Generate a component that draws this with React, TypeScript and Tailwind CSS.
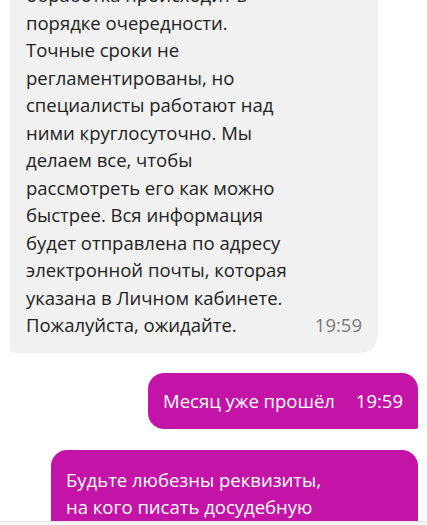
const incoming = [
  "обработка происходит в",
  "порядке очередности.",
  "Точные сроки не",
  "регламентированы, но",
  "специалисты работают над",
  "ними круглосуточно. Мы",
  "делаем все, чтобы",
  "рассмотреть его как можно",
  "быстрее. Вся информация",
  "будет отправлена по адресу",
  "электронной почты, которая",
  "указана в Личном кабинете.",
]

export default function App() {
  return (
    <div
      className="relative h-[525px] w-[427px] overflow-hidden bg-white text-[18.5px] leading-[27.5px]"
      style={{ fontFamily: '"Open Sans", "Noto Sans", sans-serif' }}
    >
      <div className="-mt-[29px] flex flex-col">
        <div className="ml-[10px] w-[368px] rounded-[18px] rounded-bl-[4px] bg-[#f1f1f1] pb-[14px] pl-[16px] pr-[16px] pt-[10px] text-[#222]">
          {incoming.map((line) => (
            <div key={line}>{line}</div>
          ))}
          <div className="flex items-end justify-between">
            <span>Пожалуйста, ожидайте.</span>
            <span className="text-[#7a7a7a]">19:59</span>
          </div>
        </div>

        <div className="mt-[20px] mr-[9px] flex justify-end">
          <div className="flex h-[56px] w-[270px] items-center justify-between rounded-[16px] rounded-br-[2px] bg-[#c414a8] pl-[15px] pr-[15px] text-white">
            <span>Месяц уже прошёл</span>
            <span>19:59</span>
          </div>
        </div>

        <div className="mt-[21px] mr-[9px] flex justify-end">
          <div className="w-[367px] rounded-[16px] bg-[#c414a8] pl-[15px] pr-[15px] pt-[16px] pb-[20px] text-white">
            <div>Будьте любезны реквизиты,</div>
            <div>на кого писать досудебную</div>
            <div>претензию</div>
          </div>
        </div>
      </div>

      <div className="absolute bottom-0 left-0 h-[4px] w-full border-t border-[#e4e4e4] bg-[#f7f7f7]" />
    </div>
  )
}
